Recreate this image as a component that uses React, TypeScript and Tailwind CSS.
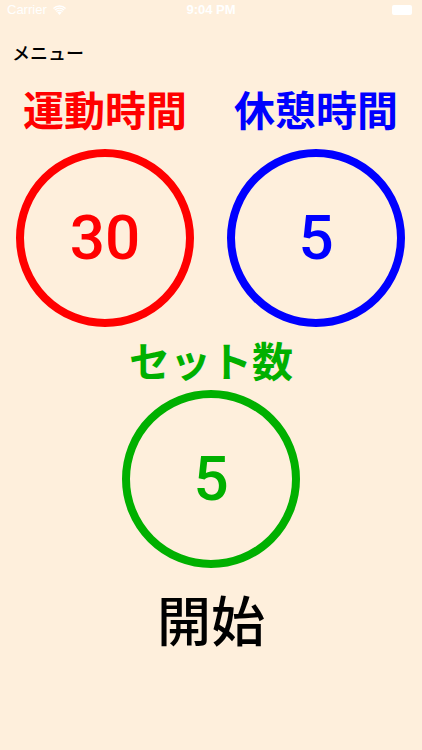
const jp = "font-['Noto_Sans_CJK_JP','Noto_Sans',sans-serif]";
const num = "font-['Roboto','Liberation_Sans',Arial,sans-serif]";

function StatusBar() {
  return (
    <div className="relative flex h-5 items-center justify-between px-[7px] text-[13px] text-white font-['Liberation_Sans',Arial,sans-serif]">
      <div className="flex items-center gap-[6px]">
        <span>Carrier</span>
        <svg width="13" height="10" viewBox="0 0 13 10" fill="white">
          <path d="M6.5 10 L4.3 7.6 A3.2 3.2 0 0 1 8.7 7.6 Z" />
          <path d="M2.9 6.1 A5.2 5.2 0 0 1 10.1 6.1 L9.2 7.1 A3.9 3.9 0 0 0 3.8 7.1 Z" />
          <path d="M1.4 4.5 A7.4 7.4 0 0 1 11.6 4.5 L10.7 5.5 A6.1 6.1 0 0 0 2.3 5.5 Z" />
          <path d="M0 2.9 A9.6 9.6 0 0 1 13 2.9 L12.1 3.9 A8.3 8.3 0 0 0 0.9 3.9 Z" />
        </svg>
      </div>
      <span className="absolute left-1/2 -translate-x-1/2 font-bold">9:04 PM</span>
      <div className="mr-[3px] h-[10px] w-[20px] rounded-[2px] bg-white" />
    </div>
  );
}

function Dial({ value, color }: { value: string; color: string }) {
  return (
    <div
      className={`flex h-[178px] w-[178px] items-center justify-center rounded-full border-[8px] ${color}`}
    >
      <span className={`${num} text-[62px] leading-none font-medium`}>{value}</span>
    </div>
  );
}

export default function App() {
  return (
    <div className="h-[750px] w-[422px] overflow-hidden bg-[#feefdc]">
      <StatusBar />
      <div className={`${jp} mt-[21px] pl-3 text-[18px] leading-[22px] font-medium text-black`}>
        メニュー
      </div>

      <div className="mt-[24px] grid grid-cols-[178px_178px] gap-x-[33px] px-4">
        <div className={`${jp} text-center text-[41px] leading-[42px] font-bold text-[#ff0000]`}>
          運動時間
        </div>
        <div className={`${jp} text-center text-[41px] leading-[42px] font-bold text-[#0000ff]`}>
          休憩時間
        </div>
        <div className="mt-[20px]">
          <Dial value="30" color="border-[#ff0000] text-[#ff0000]" />
        </div>
        <div className="mt-[20px]">
          <Dial value="5" color="border-[#0000ff] text-[#0000ff]" />
        </div>
      </div>

      <div className="flex flex-col items-center">
        <div className={`${jp} mt-[11px] text-[41px] leading-[42px] font-bold text-[#00b000]`}>
          セット数
        </div>
        <div className="mt-[10px]">
          <Dial value="5" color="border-[#00b000] text-[#00b000]" />
        </div>
        <div className={`${jp} mt-[22px] text-[54px] leading-[58px] font-medium text-black`}>
          開始
        </div>
      </div>
    </div>
  );
}
